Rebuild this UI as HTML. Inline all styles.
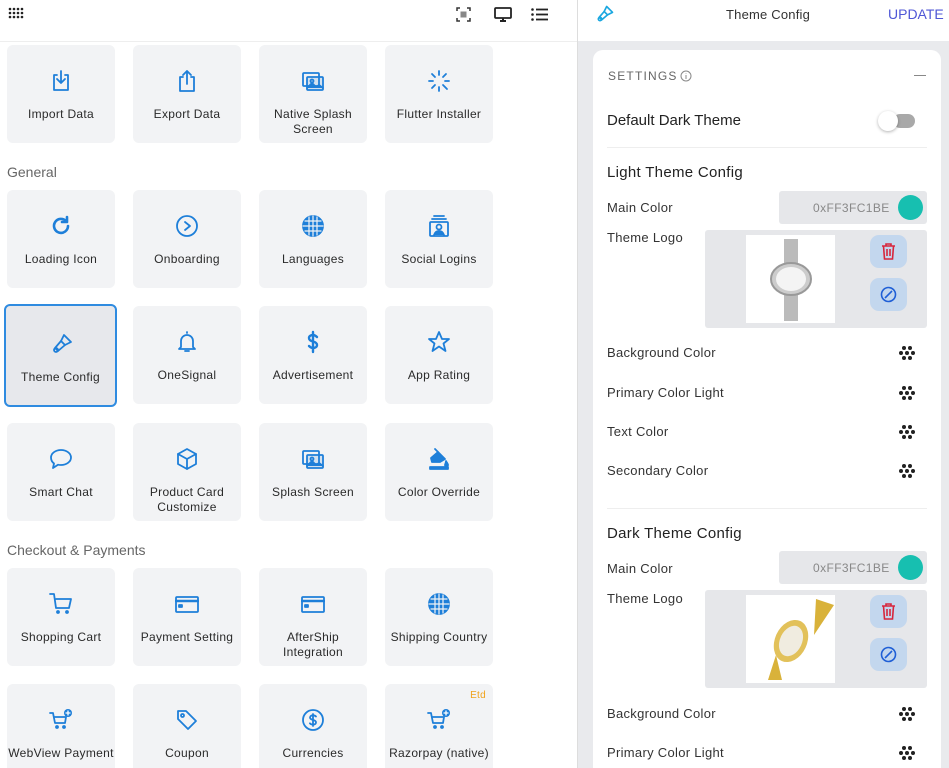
<!DOCTYPE html>
<html style="width:949px;height:768px;overflow:hidden"><head><meta charset="utf-8"><style>
*{box-sizing:border-box;margin:0;padding:0}
body{width:949px;height:768px;overflow:hidden;background:#fff;font-family:"Liberation Sans",sans-serif;position:relative;color:#222}
.a{position:absolute}
.t{position:absolute;width:108px;height:98px;background:#f2f3f5;border-radius:6px;text-align:center;font-size:12px;color:#2a2a2a;letter-spacing:.3px;line-height:15px}
.t svg{position:absolute;left:42px;top:24px;width:24px;height:24px;fill:none;stroke:#1e7fd9;stroke-width:1.8;stroke-linecap:round;stroke-linejoin:round}
.t span{position:absolute;left:0;right:0;top:62px}
.sel{background:#e7e8ec;border:2px solid #2f8be0;border-radius:6px}
.h{position:absolute;left:7px;font-size:14px;color:#666}
.lbl{position:absolute;left:607px;font-size:13px;color:#333;letter-spacing:.3px}
.dots{position:absolute;left:899px;width:16px;height:16px}
.cbox{position:absolute;left:779px;width:148px;height:33px;background:#e6e7ea;border-radius:3px;font-size:12px;color:#888;letter-spacing:.4px}
.lbox{position:absolute;left:705px;width:222px;height:98px;background:#e6e7ea;border-radius:3px}
.btn{position:absolute;left:165px;width:37px;height:33px;background:#c3d7ee;border-radius:9px}
</style></head><body>
<svg class="a" style="left:8px;top:7px" width="17" height="14" viewBox="0 0 17 14"><g fill="#222">
<circle cx="2" cy="2" r="1.3"/><circle cx="6" cy="2" r="1.3"/><circle cx="10" cy="2" r="1.3"/><circle cx="14" cy="2" r="1.3"/>
<circle cx="2" cy="6" r="1.3"/><circle cx="6" cy="6" r="1.3"/><circle cx="10" cy="6" r="1.3"/><circle cx="14" cy="6" r="1.3"/>
<circle cx="2" cy="10" r="1.3"/><circle cx="6" cy="10" r="1.3"/><circle cx="10" cy="10" r="1.3"/><circle cx="14" cy="10" r="1.3"/></g></svg>
<svg class="a" style="left:456px;top:7px" width="15" height="15" viewBox="0 0 15 15" fill="none" stroke="#333" stroke-width="1.5"><path d="M1 4V1h3M11 1h3v3M14 11v3h-3M4 14H1v-3"/><rect x="4.5" y="4.5" width="6" height="6" fill="#888" stroke="none"/></svg>
<svg class="a" style="left:494px;top:7px" width="18" height="16" viewBox="0 0 18 16"><rect x="1" y="1" width="16" height="10" rx="1" fill="none" stroke="#222" stroke-width="1.8"/><rect x="6" y="13" width="6" height="2" fill="#222"/><rect x="8" y="11" width="2" height="3" fill="#222"/></svg>
<svg class="a" style="left:531px;top:8px" width="18" height="13" viewBox="0 0 18 13" fill="#222"><circle cx="1.5" cy="1.5" r="1.3"/><circle cx="1.5" cy="6.5" r="1.3"/><circle cx="1.5" cy="11.5" r="1.3"/><rect x="5" y="0.6" width="12" height="1.8"/><rect x="5" y="5.6" width="12" height="1.8"/><rect x="5" y="10.6" width="12" height="1.8"/></svg>
<div class="a" style="left:0;top:41px;width:577px;height:1px;background:#eee"></div>
<div class="a" style="left:577px;top:0;width:1px;height:768px;background:#ddd"></div>

<div class="t" style="left:7px;top:45px"><svg viewBox="0 0 24 24"><path d="M8 6H5v15h14V6h-3M12 2v12M8 10l4 4 4-4"/></svg><span style="top:62px">Import Data</span></div>
<div class="t" style="left:133px;top:45px"><svg viewBox="0 0 24 24"><path d="M8 8H5v14h14V8h-3M12 15V2M8 6l4-4 4 4"/></svg><span>Export Data</span></div>
<div class="t" style="left:259px;top:45px"><svg viewBox="0 0 24 24"><rect x="2" y="4" width="16" height="13" rx="1"/><rect x="6" y="8" width="16" height="13" rx="1" fill="#1e7fd9" fill-opacity=".15"/><path d="M6 19l5-5 4 4 3-2 4 3" fill="#1e7fd9"/><circle cx="11" cy="12" r="1.5"/></svg><span>Native Splash<br>Screen</span></div>
<div class="t" style="left:385px;top:45px"><svg viewBox="0 0 24 24"><path d="M12 2v4M12 18v4M2 12h4M18 12h4M5 5l3 3M16 16l4 4M19 5l-3 3M5 19l3-3"/></svg><span>Flutter Installer</span></div>
<div class="h" style="top:164px">General</div>
<div class="t" style="left:7px;top:190px"><svg viewBox="0 0 24 24" style="stroke-width:2.6"><path d="M19 12a7 7 0 1 1-2-5"/><path d="M18 3v5h-5"/></svg><span>Loading Icon</span></div>
<div class="t" style="left:133px;top:190px"><svg viewBox="0 0 24 24"><circle cx="12" cy="12" r="10"/><path d="M10 8l5 4-5 4"/></svg><span>Onboarding</span></div>
<div class="t" style="left:259px;top:190px"><svg viewBox="0 0 24 24"><circle cx="12" cy="12" r="10" fill="#1e7fd9"/><path d="M2 12h20M12 2v20M4 7h16M4 17h16M8 3v18M16 3v18" stroke="#f2f3f5" stroke-width="1.2"/></svg><span>Languages</span></div>
<div class="t" style="left:385px;top:190px"><svg viewBox="0 0 24 24"><path d="M7 2h10M5 5h14"/><rect x="3" y="8" width="18" height="14" rx="1"/><circle cx="12" cy="13" r="2.5"/><path d="M7 21c1-3 3-4 5-4s4 1 5 4" fill="#1e7fd9"/></svg><span>Social Logins</span></div>

<div class="t sel" style="left:4px;top:304px;width:113px;height:103px"><svg viewBox="0 0 24 24" style="left:44px;top:26px"><path d="M14 3l7 7-6 3-4-4z"/><path d="M11 9l-6 7 3 3 7-6"/><circle cx="6" cy="18" r="2"/></svg><span style="top:64px">Theme Config</span></div>
<div class="t" style="left:133px;top:306px"><svg viewBox="0 0 24 24"><path d="M6 17V11a6 6 0 0 1 12 0v6l2 2H4z"/><path d="M10 21h4M12 3V2"/></svg><span>OneSignal</span></div>
<div class="t" style="left:259px;top:306px"><svg viewBox="0 0 24 24" style="stroke-width:2.4"><path d="M16 7c-1-1-2-2-4-2s-4 1-4 3 2 3 4 3.5 4 1.5 4 3.5-2 3-4 3-3-1-4-2M12 2v20"/></svg><span>Advertisement</span></div>
<div class="t" style="left:385px;top:306px"><svg viewBox="0 0 24 24"><path d="M12 2l3 7h7l-5.5 4.5 2 7.5-6.5-4.5-6.5 4.5 2-7.5L2 9h7z"/></svg><span>App Rating</span></div>

<div class="t" style="left:7px;top:423px"><svg viewBox="0 0 24 24"><path d="M12 3c5.5 0 10 3.3 10 7.5S17.5 18 12 18c-1 0-2 0-3-.3L4 21l1-4.5C3 15 2 13 2 10.5 2 6.3 6.5 3 12 3z"/></svg><span>Smart Chat</span></div>
<div class="t" style="left:133px;top:423px"><svg viewBox="0 0 24 24"><path d="M12 2l9 5v10l-9 5-9-5V7z"/><path d="M3 7l9 5 9-5M12 12v10"/></svg><span>Product Card<br>Customize</span></div>
<div class="t" style="left:259px;top:423px"><svg viewBox="0 0 24 24"><rect x="2" y="4" width="16" height="13" rx="1"/><rect x="6" y="8" width="16" height="13" rx="1" fill="#1e7fd9" fill-opacity=".15"/><path d="M6 19l5-5 4 4 3-2 4 3" fill="#1e7fd9"/><circle cx="11" cy="12" r="1.5"/></svg><span>Splash Screen</span></div>
<div class="t" style="left:385px;top:423px"><svg viewBox="0 0 24 24"><path d="M8 2l3 3"/><path d="M4 11l7-6 7 7-5 3H5z" fill="#1e7fd9"/><path d="M19 14c1 2 2 3 2 4a1.5 1.5 0 0 1-3 0c0-1 1-2 1-4z" fill="#1e7fd9"/><rect x="3" y="20" width="18" height="2" fill="#1e7fd9"/></svg><span>Color Override</span></div>

<div class="h" style="top:542px">Checkout &amp; Payments</div>
<div class="t" style="left:7px;top:568px"><svg viewBox="0 0 24 24"><path d="M1 2h4l2 14h13l2-9H7"/><circle cx="9" cy="20" r="1" fill="#1e7fd9"/><circle cx="18" cy="20" r="1" fill="#1e7fd9"/></svg><span>Shopping Cart</span></div>
<div class="t" style="left:133px;top:568px"><svg viewBox="0 0 24 24"><rect x="1" y="5" width="22" height="15" rx="1"/><path d="M1 9h22" stroke-width="2.5"/><rect x="4" y="13" width="3" height="2" fill="#1e7fd9"/></svg><span>Payment Setting</span></div>
<div class="t" style="left:259px;top:568px"><svg viewBox="0 0 24 24"><rect x="1" y="5" width="22" height="15" rx="1"/><path d="M1 9h22" stroke-width="2.5"/><rect x="4" y="13" width="3" height="2" fill="#1e7fd9"/></svg><span>AfterShip<br>Integration</span></div>
<div class="t" style="left:385px;top:568px"><svg viewBox="0 0 24 24"><circle cx="12" cy="12" r="10" fill="#1e7fd9"/><path d="M2 12h20M12 2v20M4 7h16M4 17h16M8 3v18M16 3v18" stroke="#f2f3f5" stroke-width="1.2"/></svg><span>Shipping Country</span></div>

<div class="t" style="left:7px;top:684px"><svg viewBox="0 0 24 24"><path d="M1 5h3l2 10h10l1-6H5"/><circle cx="8" cy="19" r="1" fill="#1e7fd9"/><circle cx="15" cy="19" r="1" fill="#1e7fd9"/><circle cx="19" cy="5" r="4" fill="#1e7fd9" stroke="none"/><path d="M19 3v4M17 5h4" stroke="#fff" stroke-width="1.3"/></svg><span>WebView Payment</span></div>
<div class="t" style="left:133px;top:684px"><svg viewBox="0 0 24 24"><path d="M3 3h8l10 10-8 8L3 11z"/><circle cx="7.5" cy="7.5" r="1.5"/></svg><span>Coupon</span></div>
<div class="t" style="left:259px;top:684px"><svg viewBox="0 0 24 24"><circle cx="12" cy="12" r="10"/><path d="M15 8.5c-.7-.8-1.6-1.2-3-1.2s-3 .7-3 2.2 1.5 2 3 2.4 3 1 3 2.5-1.5 2.2-3 2.2-2.4-.5-3.1-1.3M12 6v12"/></svg><span>Currencies</span></div>
<div class="t" style="left:385px;top:684px"><div class="a" style="right:7px;top:4px;font-size:10px;color:#f0a21b">Etd</div><svg viewBox="0 0 24 24"><path d="M1 5h3l2 10h10l1-6H5"/><circle cx="8" cy="19" r="1" fill="#1e7fd9"/><circle cx="15" cy="19" r="1" fill="#1e7fd9"/><circle cx="19" cy="5" r="4" fill="#1e7fd9" stroke="none"/><path d="M19 3v4M17 5h4" stroke="#fff" stroke-width="1.3"/></svg><span>Razorpay (native)</span></div>

<div class="a" style="left:578px;top:41px;width:371px;height:727px;background:#e9eaed"></div>
<svg class="a" style="left:595px;top:4px" width="20" height="20" viewBox="0 0 24 24" fill="none" stroke="#1aa7e0" stroke-width="2" stroke-linejoin="round"><path d="M14 3l7 7-6 3-4-4z"/><path d="M11 9l-6 7 3 3 7-6"/><circle cx="6" cy="18" r="2"/></svg>
<div class="a" style="left:726px;top:7px;font-size:13px;color:#333;letter-spacing:.2px">Theme Config</div>
<div class="a" style="left:888px;top:6px;font-size:14px;color:#4f57d6">UPDATE</div>
<div class="a" style="left:593px;top:50px;width:348px;height:718px;background:#fff;border-radius:10px 10px 0 0"></div>
<div class="a" style="left:608px;top:69px;font-size:12px;color:#666;letter-spacing:1.2px">SETTINGS</div>
<svg class="a" style="left:680px;top:70px" width="12" height="12" viewBox="0 0 12 12" fill="none" stroke="#888"><circle cx="6" cy="6" r="5"/><path d="M6 5v4M6 3v.5"/></svg>
<div class="a" style="left:914px;top:75px;width:12px;height:1px;background:#888"></div>
<div class="a" style="left:607px;top:112px;font-size:15px;color:#222">Default Dark Theme</div>
<div class="a" style="left:893px;top:114px;width:22px;height:14px;background:#a9a9a9;border-radius:7px"></div>
<div class="a" style="left:878px;top:111px;width:20px;height:20px;background:#fff;border-radius:50%;box-shadow:0 1px 3px rgba(0,0,0,.3)"></div>
<div class="a" style="left:607px;top:147px;width:320px;height:1px;background:#eee"></div>
<div class="a" style="left:607px;top:164px;font-size:15px;color:#222;letter-spacing:.3px">Light Theme Config</div>
<div class="lbl" style="top:200px">Main Color</div>
<div class="cbox" style="top:191px"><span class="a" style="left:34px;top:10px">0xFF3FC1BE</span><div class="a" style="left:119px;top:4px;width:25px;height:25px;border-radius:50%;background:#17bfb0"></div></div>
<div class="lbl" style="top:230px">Theme Logo</div>
<div class="lbox" style="top:230px"><div class="a" style="left:41px;top:5px;width:89px;height:88px;background:#fff"><svg width="89" height="88" viewBox="0 0 89 88"><path d="M38 4h14v28H38zM38 56h14v30H38z" fill="#bbb"/><ellipse cx="45" cy="44" rx="20" ry="16" fill="#ccc" stroke="#999" stroke-width="2"/><ellipse cx="45" cy="44" rx="15" ry="12" fill="#f4f4f4"/></svg></div>
<div class="btn" style="top:5px"><svg class="a" style="left:11px;top:8px" width="15" height="17" viewBox="0 0 15 17" fill="none" stroke="#d7263d" stroke-width="1.6"><path d="M1 3h13M5 3V1h5v2M2.5 3l1 13h8l1-13M6 6v7M9 6v7"/></svg></div>
<div class="btn" style="top:48px"><svg class="a" style="left:10px;top:8px" width="17" height="17" viewBox="0 0 17 17" fill="none" stroke="#1f5fd6" stroke-width="1.6"><circle cx="8.5" cy="8.5" r="7"/><path d="M5 12l7-7"/></svg></div></div>
<div class="lbl" style="top:345px">Background Color</div>
<div class="lbl" style="top:385px">Primary Color Light</div>
<div class="lbl" style="top:424px">Text Color</div>
<div class="lbl" style="top:463px">Secondary Color</div>
<div class="a" style="left:607px;top:508px;width:320px;height:1px;background:#eee"></div>
<div class="a" style="left:607px;top:525px;font-size:15px;color:#222;letter-spacing:.3px">Dark Theme Config</div>
<div class="lbl" style="top:561px">Main Color</div>
<div class="cbox" style="top:551px"><span class="a" style="left:34px;top:10px">0xFF3FC1BE</span><div class="a" style="left:119px;top:4px;width:25px;height:25px;border-radius:50%;background:#17bfb0"></div></div>
<div class="lbl" style="top:591px">Theme Logo</div>
<div class="lbox" style="top:590px"><div class="a" style="left:41px;top:5px;width:89px;height:88px;background:#fff"><svg width="89" height="88" viewBox="0 0 89 88"><path d="M70 4l18 6-20 30zM30 60l-8 25 14 0z" fill="#d9b23a"/><ellipse cx="45" cy="46" rx="16" ry="22" transform="rotate(25 45 46)" fill="#e2c15a"/><ellipse cx="45" cy="46" rx="11" ry="16" transform="rotate(25 45 46)" fill="#f0ece0"/></svg></div>
<div class="btn" style="top:5px"><svg class="a" style="left:11px;top:8px" width="15" height="17" viewBox="0 0 15 17" fill="none" stroke="#d7263d" stroke-width="1.6"><path d="M1 3h13M5 3V1h5v2M2.5 3l1 13h8l1-13M6 6v7M9 6v7"/></svg></div>
<div class="btn" style="top:48px"><svg class="a" style="left:10px;top:8px" width="17" height="17" viewBox="0 0 17 17" fill="none" stroke="#1f5fd6" stroke-width="1.6"><circle cx="8.5" cy="8.5" r="7"/><path d="M5 12l7-7"/></svg></div></div>
<div class="lbl" style="top:706px">Background Color</div>
<div class="lbl" style="top:745px">Primary Color Light</div>
<svg width="0" height="0" style="position:absolute"><defs><g id="d" fill="#222"><circle cx="5" cy="2" r="2"/><circle cx="11" cy="2" r="2"/><circle cx="2" cy="7" r="2"/><circle cx="8" cy="7" r="2"/><circle cx="14" cy="7" r="2"/><circle cx="5" cy="12" r="2"/><circle cx="11" cy="12" r="2"/></g></defs></svg>
<svg class="dots" style="top:345px" viewBox="0 0 16 14"><use href="#d"/></svg>
<svg class="dots" style="top:385px" viewBox="0 0 16 14"><use href="#d"/></svg>
<svg class="dots" style="top:424px" viewBox="0 0 16 14"><use href="#d"/></svg>
<svg class="dots" style="top:463px" viewBox="0 0 16 14"><use href="#d"/></svg>
<svg class="dots" style="top:706px" viewBox="0 0 16 14"><use href="#d"/></svg>
<svg class="dots" style="top:745px" viewBox="0 0 16 14"><use href="#d"/></svg>
</body></html>
